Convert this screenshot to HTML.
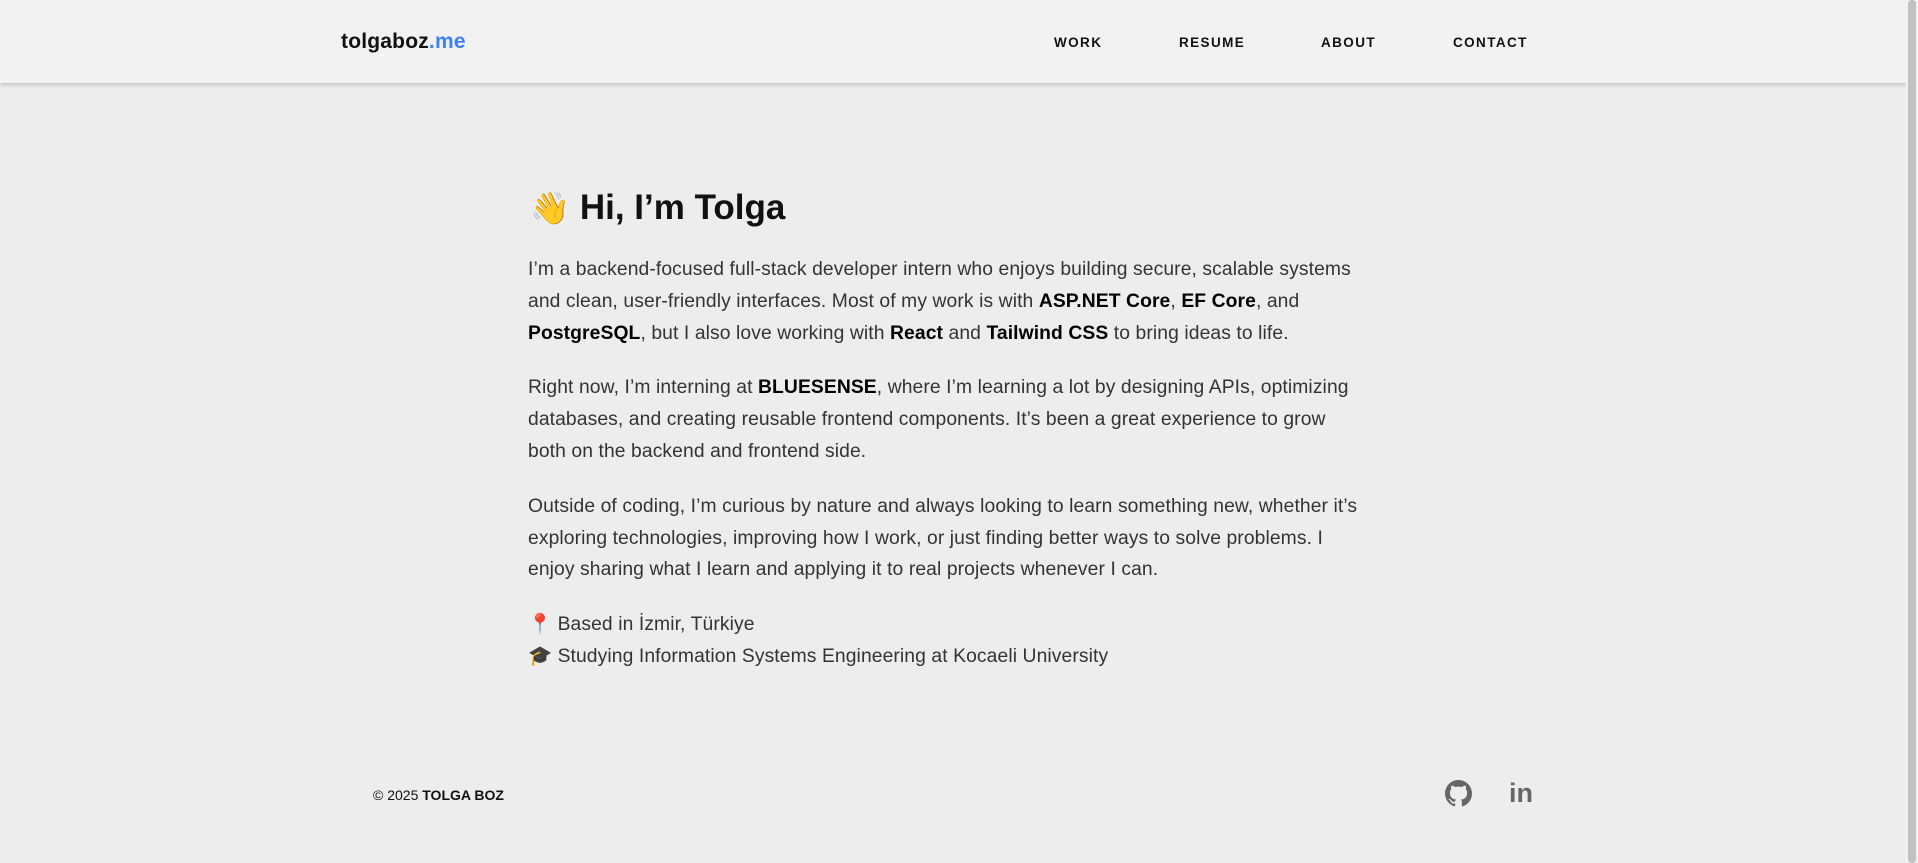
<!DOCTYPE html>
<html><head><meta charset="utf-8"><style>
*{margin:0;padding:0;box-sizing:border-box}
html,body{width:1918px;height:863px;overflow:hidden;background:#ededed;font-family:"Liberation Sans",sans-serif;color:#333}
.sb{position:absolute;right:0;top:0;width:12px;height:863px;background:#f0f0f0}
.sb i{position:absolute;left:2px;top:0;width:8px;height:863px;background:#c1c1c1;border-radius:4px}
header{position:absolute;left:0;top:0;width:1906px;height:83px;background:#f2f2f2;box-shadow:0 2px 4px rgba(0,0,0,.18)}
.logo{position:absolute;left:341px;top:30px;font-size:21px;font-weight:bold;color:#111;letter-spacing:.2px}
.logo span{color:#3b82f6}
nav a{position:absolute;top:35px;font-size:13.5px;font-weight:bold;color:#111;letter-spacing:1.4px;text-decoration:none}
h1{position:absolute;left:530px;top:188px;font-size:35px;font-weight:bold;color:#111;white-space:nowrap}
h1 .e{font-family:"Noto Color Emoji","DejaVu Sans",sans-serif;font-size:32px;margin-right:10px}
.c{position:absolute;left:528px;top:254px;width:840px;font-size:19.3px;line-height:31.8px;color:#333;letter-spacing:.1px}
.c p{margin-bottom:23px}
.c b{color:#000}
.c .l{margin:0}
footer{position:absolute;left:373px;top:787px;font-size:14px;color:#111}
</style></head><body>
<header>
<div class="logo">tolgaboz<span>.me</span></div>
<nav><a style="left:1054px">WORK</a><a style="left:1179px">RESUME</a><a style="left:1321px">ABOUT</a><a style="left:1453px">CONTACT</a></nav>
</header>
<h1><span class="e">👋</span>Hi, I’m Tolga</h1>
<div class="c">
<p>I’m a backend-focused full-stack developer intern who enjoys building secure, scalable systems and clean, user-friendly interfaces. Most of my work is with <b>ASP.NET Core</b>, <b>EF Core</b>, and <b>PostgreSQL</b>, but I also love working with <b>React</b> and <b>Tailwind CSS</b> to bring ideas to life.</p>
<p>Right now, I’m interning at <b>BLUESENSE</b>, where I’m learning a lot by designing APIs, optimizing databases, and creating reusable frontend components. It’s been a great experience to grow both on the backend and frontend side.</p>
<p>Outside of coding, I’m curious by nature and always looking to learn something new, whether it’s exploring technologies, improving how I work, or just finding better ways to solve problems. I enjoy sharing what I learn and applying it to real projects whenever I can.</p>
<div class="l">📍 Based in İzmir, Türkiye</div>
<div class="l">🎓 Studying Information Systems Engineering at Kocaeli University</div>
</div>
<footer>© 2025 <b>TOLGA BOZ</b></footer>
<svg style="position:absolute;left:1445px;top:780px" width="27" height="27" viewBox="0 0 16 16"><path fill="#666" d="M8 0C3.58 0 0 3.58 0 8c0 3.54 2.29 6.530 5.47 7.59.4.07.55-.17.55-.38v-1.33c-2.23.48-2.7-1.070-2.7-1.070-.36-.92-.89-1.17-.89-1.17-.73-.5.06-.49.06-.49.8.06 1.23.83 1.23.83.71 1.22 1.87.87 2.33.66.07-.52.28-.87.5-1.070-1.78-.2-3.64-.89-3.64-3.95 0-.87.31-1.59.82-2.15-.08-.2-.36-1.02.08-2.12 0 0 .67-.21 2.2.82a7.6 7.6 0 0 1 4 0c1.53-1.04 2.2-.82 2.2-.82.44 1.1.16 1.92.08 2.12.51.56.82 1.27.82 2.15 0 3.07-1.87 3.75-3.65 3.95.29.25.54.73.54 1.48v2.2c0 .21.15.46.55.38A8.01 8.01 0 0 0 16 8c0-4.42-3.58-8-8-8z"/></svg>
<div style="position:absolute;left:1509px;top:778px;font-size:27px;font-weight:bold;color:#666">in</div>
<div class="sb"><i></i></div>
</body></html>
